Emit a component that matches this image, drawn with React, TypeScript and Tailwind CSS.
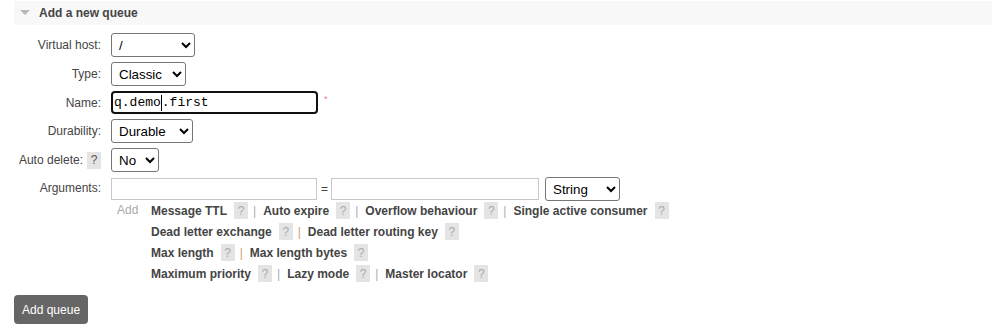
import React from 'react';

const Help = ({ dark }: { dark?: boolean }) => (
  <span
    className={`inline-flex items-center justify-center w-[14px] h-[17px] bg-[#e4e4e4] text-[12px] leading-none ${
      dark ? 'text-[#555]' : 'text-[#aaa]'
    }`}
  >
    ?
  </span>
);

type Arg = { label: string; sep?: 'gray' | 'orange' };

const argRows: Arg[][] = [
  [
    { label: 'Message TTL', sep: 'gray' },
    { label: 'Auto expire', sep: 'gray' },
    { label: 'Overflow behaviour', sep: 'gray' },
    { label: 'Single active consumer' },
  ],
  [{ label: 'Dead letter exchange', sep: 'orange' }, { label: 'Dead letter routing key' }],
  [{ label: 'Max length', sep: 'orange' }, { label: 'Max length bytes' }],
  [
    { label: 'Maximum priority', sep: 'gray' },
    { label: 'Lazy mode', sep: 'gray' },
    { label: 'Master locator' },
  ],
];

const Label = ({ children }: { children: React.ReactNode }) => (
  <div className="w-[87px] flex justify-end items-center gap-[4px] text-[12px] text-[#444]">{children}</div>
);

const selectCls =
  "h-[24px] border border-[#767676] rounded-[3px] bg-white text-black text-[13.333px] pl-[3px] font-['Liberation_Sans',Arial,sans-serif]";

export default function App() {
  return (
    <div className="w-[992px] h-[336px] bg-white font-['Liberation_Sans',Arial,sans-serif] text-[#444] pt-px">
      {/* section header */}
      <div className="ml-[14px] h-[24px] bg-[#f8f8f8] flex items-center">
        <svg width="10" height="6" viewBox="0 0 10 6" className="ml-[6px]">
          <polygon points="0,0 10,0 5,5" fill="#b8b8b8" />
        </svg>
        <span className="ml-[9px] text-[12px] font-bold text-[#444]">Add a new queue</span>
      </div>

      <div className="ml-[14px] mt-[8px] flex flex-col gap-[5px]">
        <div className="flex items-center gap-[10px]">
          <Label>Virtual host:</Label>
          <select className={`${selectCls} w-[84px]`} defaultValue="/">
            <option value="/">/</option>
          </select>
        </div>
        <div className="flex items-center gap-[10px]">
          <Label>Type:</Label>
          <select className={`${selectCls} w-[75px]`} defaultValue="classic">
            <option value="classic">Classic</option>
            <option value="quorum">Quorum</option>
          </select>
        </div>
        <div className="flex items-center gap-[10px]">
          <Label>Name:</Label>
          <div className="w-[207px] h-[23px] border-2 border-[#101010] rounded-[4px] flex items-center pl-[1px] font-['Liberation_Mono',monospace] text-[13px] text-black">
            <span>q.demo</span>
            <span className="w-px h-[16px] bg-black" />
            <span>.first</span>
          </div>
          <span className="-ml-[4px] -mt-[5px] text-[9px] text-[#f08080]">*</span>
        </div>
        <div className="flex items-center gap-[10px]">
          <Label>Durability:</Label>
          <select className={`${selectCls} h-[23px] w-[82px]`} defaultValue="durable">
            <option value="durable">Durable</option>
            <option value="transient">Transient</option>
          </select>
        </div>
        <div className="flex items-center gap-[10px]">
          <Label>
            <span>Auto delete:</span>
            <Help dark />
          </Label>
          <select className={`${selectCls} w-[48px]`} defaultValue="no">
            <option value="no">No</option>
            <option value="yes">Yes</option>
          </select>
        </div>
        <div className="flex items-start gap-[10px]">
          <div className="w-[87px] h-[22px] flex justify-end items-center text-[12px] text-[#444]">Arguments:</div>
          <div className="flex flex-col">
            <div className="flex items-center">
              <div className="w-[206px] h-[22px] border border-[#c8c8c8] bg-white" />
              <span className="ml-[4px] mr-[3px] text-[12px] text-[#444]">=</span>
              <div className="w-[208px] h-[22px] border border-[#c8c8c8] bg-white" />
              <select className={`${selectCls} ml-[6px] w-[75px] h-[23px]`} defaultValue="string">
                <option value="string">String</option>
                <option value="number">Number</option>
                <option value="boolean">Boolean</option>
              </select>
            </div>
            <div className="flex -mt-[1px]">
              <span className="ml-[6px] w-[34px] text-[12px] text-[#aaa] leading-[21px]">Add</span>
              <div className="flex flex-col">
                {argRows.map((row, i) => (
                  <div key={i} className="flex items-center h-[21px] text-[12px]">
                    {row.map((a) => (
                      <React.Fragment key={a.label}>
                        <span className="font-bold text-[#444]">{a.label}</span>
                        <span className="ml-[7px]">
                          <Help />
                        </span>
                        {a.sep && (
                          <span
                            className={`ml-[5px] mr-[7px] ${
                              a.sep === 'orange' ? 'text-[#d0a070]' : 'text-[#a8aab8]'
                            }`}
                          >
                            |
                          </span>
                        )}
                      </React.Fragment>
                    ))}
                  </div>
                ))}
              </div>
            </div>
          </div>
        </div>
      </div>

      <button className="ml-[14px] mt-[11px] h-[29px] px-[8px] rounded-[4px] bg-[#666] text-white text-[12px]">
        Add queue
      </button>
    </div>
  );
}
